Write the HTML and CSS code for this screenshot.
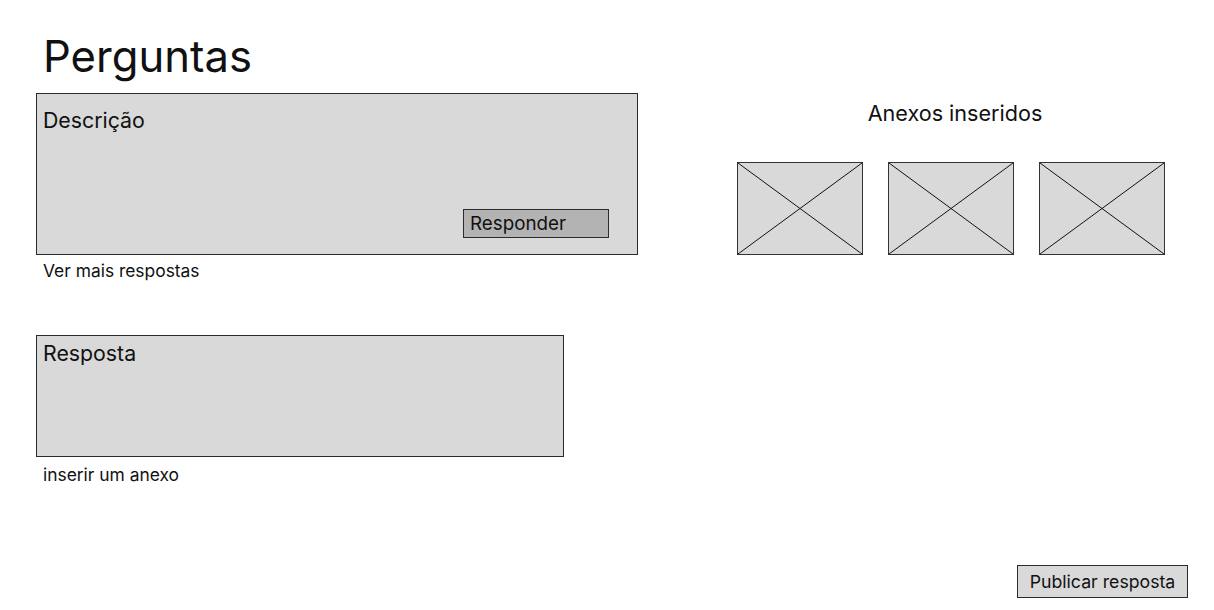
FILE: index.html
```html
<html>
    <head>
        <meta charset="UTF-8">
        <link rel="stylesheet" href="styles.css">
    </head>
    <body>
        <div class="page">
            <div class="left">
                <h1 class="title">Perguntas</h1>
                <div class="box question">
                    <p class="box-label">Descrição</p>
                    <button class="reply">Responder</button>
                </div>
                <a class="link">Ver mais respostas</a>
                <div class="box answer">
                    <p class="box-label">Resposta</p>
                </div>
                <a class="link attach-link">inserir um anexo</a>
            </div>
            <div class="right">
                <h2 class="attach-title">Anexos inseridos</h2>
                <div class="attachments">
                    <svg class="thumb" viewBox="0 0 126 93" preserveAspectRatio="none">
                        <rect x="0.5" y="0.5" width="125" height="92" fill="#d9d9d9" stroke="#333"/>
                        <path d="M1 1 L125 92 M125 1 L1 92" stroke="#111" stroke-width="1"/>
                    </svg>
                    <svg class="thumb" viewBox="0 0 126 93" preserveAspectRatio="none">
                        <rect x="0.5" y="0.5" width="125" height="92" fill="#d9d9d9" stroke="#333"/>
                        <path d="M1 1 L125 92 M125 1 L1 92" stroke="#111" stroke-width="1"/>
                    </svg>
                    <svg class="thumb" viewBox="0 0 126 93" preserveAspectRatio="none">
                        <rect x="0.5" y="0.5" width="125" height="92" fill="#d9d9d9" stroke="#333"/>
                        <path d="M1 1 L125 92 M125 1 L1 92" stroke="#111" stroke-width="1"/>
                    </svg>
                </div>
            </div>
        </div>
        <div class="footer">
            <button class="publish">Publicar resposta</button>
        </div>
    </body>
</html>
```
FILE: styles.css
```css
body {
    margin: 0;
    font-family: Inter, "Noto Sans", sans-serif;
    color: #111;
    background: #fff;
    width: 1214px;
    height: 610px;
    overflow: hidden;
}

.page {
    display: flex;
    padding-left: 36px;
}

.left {
    display: flex;
    flex-direction: column;
    width: 602px;
}

.title {
    font-size: 43.6px;
    font-weight: 400;
    line-height: 56px;
    margin: 29px 0 8px 7px;
}

.box {
    box-sizing: border-box;
    background-color: #d9d9d9;
    border: 1px solid #2b2b2b;
    display: flex;
    flex-direction: column;
}

.question {
    width: 602px;
    height: 162px;
}

.answer {
    width: 528px;
    height: 122px;
    margin-top: 54px;
}

.box-label {
    margin: 14px 0 0 6px;
    font-size: 21.3px;
    line-height: 24px;
}

.answer .box-label {
    margin-top: 5px;
}

.reply {
    align-self: flex-end;
    margin: auto 28px 16px 0;
    width: 146px;
    height: 29px;
    box-sizing: border-box;
    background-color: #b3b3b3;
    border: 1px solid #2b2b2b;
    font-family: inherit;
    font-size: 18.8px;
    color: #111;
    text-align: left;
    padding: 0 6px;
}

.link {
    font-size: 17.4px;
    line-height: 20px;
    margin: 6px 0 0 7px;
}

.attach-link {
    margin-top: 8px;
}

.right {
    margin-left: 98px;
    width: 430px;
    display: flex;
    flex-direction: column;
    align-items: center;
}

.attach-title {
    font-size: 21.6px;
    font-weight: 400;
    line-height: 24px;
    margin: 101px 0 37px 8px;
}

.attachments {
    display: flex;
    gap: 25px;
}

.thumb {
    width: 126px;
    height: 93px;
    display: block;
}

.footer {
    display: flex;
    justify-content: flex-end;
    padding-right: 26px;
    margin-top: 80px;
}

.publish {
    box-sizing: border-box;
    width: 171px;
    height: 33px;
    background-color: #d9d9d9;
    border: 1px solid #2b2b2b;
    font-family: inherit;
    font-size: 17.7px;
    color: #111;
    padding: 0;
}
```
